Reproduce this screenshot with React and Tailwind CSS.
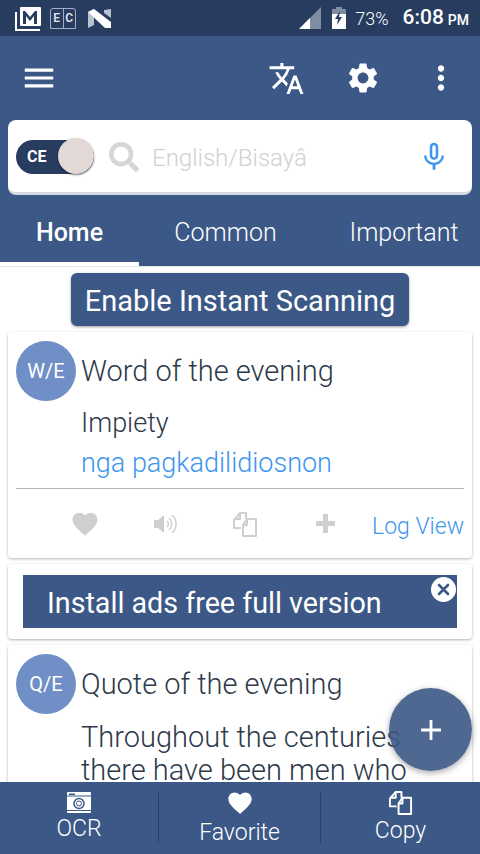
import { MdTranslate, MdSettings, MdMoreVert, MdMenu, MdMicNone, MdFavorite, MdAdd } from 'react-icons/md'
import { FaSearch } from 'react-icons/fa'

const roboto = { fontFamily: 'Roboto, sans-serif' }

function MailIcon() {
  return (
    <svg width="28" height="28" viewBox="0 0 28 28" className="shrink-0">
      <path d="M2 8v18h24" fill="none" stroke="#fff" strokeWidth="2" />
      <rect x="6" y="3" width="21" height="19" rx="1" fill="#fff" />
      <path d="M9 20V7h2l5 6 5-6h2v13h-3v-8l-4 5-4-5v8z" fill="#283c5f" />
    </svg>
  )
}

function BookIcon() {
  return (
    <div className="relative w-[26px] h-[21px] shrink-0 border border-[#9fb0c8] rounded-t-[3px] flex text-[12px] font-medium text-[#e6ebf2] leading-none">
      <div className="flex-1 flex items-center justify-center border-r border-[#9fb0c8]">E</div>
      <div className="flex-1 flex items-center justify-center">C</div>
    </div>
  )
}

function NewsIcon() {
  return (
    <svg width="23" height="19" viewBox="0 0 23 19" className="shrink-0">
      <path d="M0 3l6-3v16l-6 3z" fill="#b9c2cf" />
      <path d="M0 3l6-3 17 13v6h-6z" fill="#fff" />
      <path d="M16 1l7-1v9l-7-5z" fill="#b9c2cf" />
    </svg>
  )
}

function CopyIcon({ color, size = 26 }) {
  return (
    <svg width={size} height={size} viewBox="0 0 26 26" fill="none" stroke={color} strokeWidth="2" strokeLinejoin="round">
      <path d="M9 17H2V9l6-7h6v6" />
      <path d="M8 2v6H2" />
      <path d="M15 8h9v17H11v-11z" />
      <path d="M15 8v6h-4" />
    </svg>
  )
}

function SpeakerIcon() {
  return (
    <svg width="24" height="22" viewBox="0 0 24 22" fill="none" stroke="#cfcfcf" strokeWidth="1.5">
      <path d="M1 7h4l6-5v18l-6-5H1z" fill="#cfcfcf" stroke="none" />
      <path d="M14 8a4 4 0 0 1 0 6" />
      <path d="M16 5a8 8 0 0 1 0 12" />
      <path d="M19 2a12 12 0 0 1 0 18" />
    </svg>
  )
}

function PlusIcon() {
  return (
    <svg width="19" height="19" viewBox="0 0 19 19" className="shrink-0">
      <path d="M7 0h5v7h7v5h-7v7H7v-7H0V7h7z" fill="#cfcfcf" />
    </svg>
  )
}

function CameraIcon() {
  return (
    <svg width="24" height="21" viewBox="0 0 24 21">
      <rect x="0" y="0" width="24" height="21" rx="1" fill="#fff" />
      <rect x="2" y="1.5" width="6" height="1.5" fill="#3b5886" />
      <rect x="0" y="3.5" width="24" height="1" fill="#3b5886" />
      <rect x="0" y="18" width="24" height="1" fill="#3b5886" />
      <circle cx="12" cy="11.5" r="5" fill="none" stroke="#3b5886" strokeWidth="1.5" />
      <circle cx="12" cy="11.5" r="2.5" fill="none" stroke="#3b5886" strokeWidth="1" />
    </svg>
  )
}

function WordCard({ badge, title, children }) {
  return (
    <div className="mx-2 bg-white rounded shadow-[0_1px_3px_rgba(0,0,0,0.3)] px-2 pt-[9px]">
      <div className="flex gap-[5px] items-start">
        <div className="w-[60px] h-[60px] rounded-full bg-[#6f8fc6] text-white flex items-center justify-center text-[20px] shrink-0">{badge}</div>
        <div className="pt-[12px] text-[29px] leading-[36px] font-light text-[#2e3a4a] whitespace-nowrap">{title}</div>
      </div>
      {children}
    </div>
  )
}

export default function App() {
  return (
    <div className="w-[480px] h-[854px] relative overflow-hidden bg-white flex flex-col" style={roboto}>
      {/* status bar */}
      <div className="h-9 bg-[#283c5f] flex items-center pl-[14px] pr-[11px] shrink-0">
        <MailIcon />
        <div className="ml-[8px]"><BookIcon /></div>
        <div className="ml-[12px]"><NewsIcon /></div>
        <div className="flex-1" />
        <svg width="22" height="22" viewBox="0 0 22 22" className="shrink-0">
          <path d="M22 0v22H0z" fill="#7f8da3" />
          <path d="M11 11v11H0z" fill="#fff" />
        </svg>
        <svg width="14" height="22" viewBox="0 0 14 22" className="ml-[11px] shrink-0">
          <rect x="4" y="0" width="6" height="3" fill="#7f8da3" />
          <rect x="0" y="2" width="14" height="5" fill="#7f8da3" />
          <rect x="0" y="7" width="14" height="15" fill="#fff" />
          <path d="M8 4L3 12h3l-1 6 5-8H7z" fill="#283c5f" />
        </svg>
        <span className="ml-[9px] text-[18px] font-light text-white">73%</span>
        <span className="ml-[14px] text-[21px] font-medium text-white">6:08</span>
        <span className="ml-[4px] text-[14px] font-medium text-white mt-1">PM</span>
      </div>

      {/* toolbar */}
      <div className="h-[84px] bg-[#3b5886] flex items-center text-white shrink-0">
        <MdMenu size={38} className="ml-5" />
        <div className="flex-1" />
        <MdTranslate size={37} className="mr-[40px]" />
        <MdSettings size={36} className="mr-[41px]" />
        <MdMoreVert size={38} className="mr-[20px]" />
      </div>

      {/* search */}
      <div className="bg-[#3b5886] px-2 shrink-0">
        <div className="h-[75px] bg-white rounded-lg border-b-[3px] border-[#d5d9e0] flex items-center pl-2 pr-[21px] pt-[2px]">
          <div className="relative w-[78px] h-[34px] rounded-full bg-[#283c5f] shrink-0">
            <span className="absolute left-[11px] top-[7px] text-[16px] leading-[20px] font-bold text-white">CE</span>
            <div className="absolute right-0 top-[-2px] w-[36px] h-[36px] rounded-full bg-[#e2d9d6] shadow-[0_1px_2px_rgba(0,0,0,0.5)]" />
          </div>
          <FaSearch size={30} className="ml-[15px] text-[#d4d6d8] shrink-0" />
          <span className="ml-[13px] flex-1 text-[24px] font-light text-[#cfd1d4] pt-[2px]">English/Bisayâ</span>
          <MdMicNone size={34} className="text-[#3d96ee]" />
        </div>
      </div>

      {/* tabs */}
      <div className="h-[72px] bg-[#3b5886] flex text-white shrink-0 text-[25px] border-b border-[#e5e5e5]">
        <div className="w-[139px] flex items-center justify-center font-medium border-b-[4px] border-white pt-2">Home</div>
        <div className="w-[173px] flex items-center justify-center font-light pt-1">Common</div>
        <div className="flex-1 flex items-center justify-center font-light pl-[16px] pt-1">Important</div>
      </div>

      {/* content */}
      <div className="flex-1 min-h-0 overflow-hidden flex flex-col gap-1.5">
        <div className="flex justify-center mt-[6px]">
          <div className="w-[338px] h-[53px] rounded-md bg-[#3b5886] text-white text-[29px] flex items-center justify-center pt-1 shadow-[0_1px_3px_rgba(0,0,0,0.4)]">Enable Instant Scanning</div>
        </div>

        <WordCard badge="W/E" title="Word of the evening">
          <div className="pl-[65px] mt-[2px] text-[27px] leading-[40px] font-light text-[#2e3a4a]">Impiety</div>
          <div className="pl-[65px] text-[27px] leading-[40px] font-light text-[#3d96ee]">nga pagkadilidiosnon</div>
          <div className="border-t border-[#b5b5b5] mt-[5px] h-[70px] flex items-center">
            <MdFavorite size={30} className="ml-[54px] text-[#cfcfcf] shrink-0" />
            <div className="ml-[53px] shrink-0"><SpeakerIcon /></div>
            <div className="ml-[55px] shrink-0"><CopyIcon color="#cfcfcf" /></div>
            <div className="ml-[58px] shrink-0"><PlusIcon /></div>
            <div className="flex-1" />
            <span className="text-[23px] font-light text-[#3d96ee] pt-[8px]">Log View</span>
          </div>
        </WordCard>

        <div className="mx-2 h-[75px] shrink-0 bg-white rounded shadow-[0_1px_3px_rgba(0,0,0,0.3)] px-[15px] pt-[11px]">
          <div className="relative h-[53px] bg-[#3b5886] text-white text-[28.7px] pl-6 pt-1 flex items-center">
            Install ads free full version
            <div className="absolute right-[1px] top-[2px] w-[25px] h-[25px] rounded-full bg-white flex items-center justify-center">
              <svg width="13" height="13" viewBox="0 0 13 13" stroke="#3b5886" strokeWidth="2.6" strokeLinecap="round">
                <path d="M2 2l9 9M11 2l-9 9" />
              </svg>
            </div>
          </div>
        </div>

        <WordCard badge="Q/E" title="Quote of the evening">
          <div className="pl-[65px] mt-[7px] text-[29px] leading-[33px] font-light text-[#2e3a4a] whitespace-nowrap">
            <div>Throughout the centuries</div>
            <div>there have been men who</div>
          </div>
        </WordCard>
      </div>

      {/* bottom bar */}
      <div className="h-[72px] bg-[#3b5886] flex text-white shrink-0 text-[23px] font-light">
        <div className="w-[158px] flex flex-col items-center pt-[10px] leading-[32px]">
          <CameraIcon />
          <span>OCR</span>
        </div>
        <div className="w-px h-[50px] mt-[11px] bg-[#2a3f63]" />
        <div className="w-[161px] flex flex-col items-center pt-[7px] leading-[32px]">
          <MdFavorite size={28} />
          <span>Favorite</span>
        </div>
        <div className="w-px h-[50px] mt-[11px] bg-[#2a3f63]" />
        <div className="flex-1 flex flex-col items-center pt-[8px] leading-[32px]">
          <CopyIcon color="#fff" size={25} />
          <span>Copy</span>
        </div>
      </div>

      {/* fab */}
      <div className="absolute left-[389px] top-[688px] w-[83px] h-[83px] rounded-full bg-[#3b5886]/90 flex items-center justify-center shadow-[0_2px_6px_rgba(0,0,0,0.35)]">
        <MdAdd size={34} className="text-white" />
      </div>
    </div>
  )
}
